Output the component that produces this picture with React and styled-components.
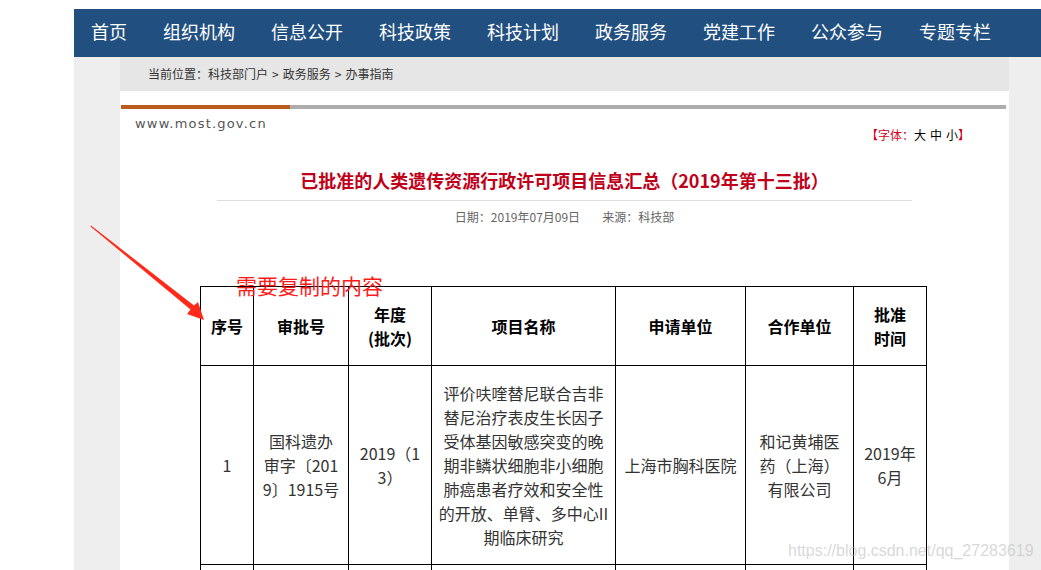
import React from 'react'
import styled, { createGlobalStyle } from 'styled-components'

const GlobalStyle = createGlobalStyle`
    body {
        margin: 0;
        background: #fff;
        font-family: "Noto Sans CJK SC", "Noto Sans", sans-serif;
    }
`
const Page = styled.div`
    position: relative;
    padding: 9px 0 0 74px;
    width: 967px;
    height: 561px;
    overflow: hidden;
`
const Nav = styled.nav`
    height: 48px;
    background: #214f80;
    display: flex;
    align-items: center;
    padding-left: 17px;
    gap: 36px;
`
const NavItem = styled.a`
    color: #fff;
    font-size: 18px;
    line-height: 44px;
    padding-bottom: 4px;
    white-space: nowrap;
`
const Main = styled.div`
    background: #eeeeee;
    padding: 0 32px 0 46px;
    min-height: 520px;
`
const Crumbs = styled.div`
    background: #e6e6e6;
    height: 34px;
    line-height: 34px;
    padding-left: 28px;
    font-size: 12px;
    color: #333;
`
const Sep = styled.span`
    margin: 0 4px;
`
const Article = styled.article`
    background: #fff;
    padding-top: 14px;
    min-height: 480px;
`
const Bar = styled.div`
    display: flex;
    height: 4px;
    margin: 0 3px 0 1px;
`
const BarPart = styled.div`
    background: ${p => p.$color};
    width: ${p => p.$w || 'auto'};
    flex: ${p => p.$w ? 'none' : 1};
`
const HeadRow = styled.div`
    display: flex;
    justify-content: space-between;
    align-items: flex-start;
    padding: 7px 39px 0 15px;
`
const Logo = styled.div`
    font-family: "DejaVu Sans", "Liberation Sans", sans-serif;
    font-size: 13px;
    letter-spacing: 1.2px;
    color: #555;
    line-height: 16px;
`
const FontSize = styled.div`
    font-size: 12px;
    margin-top: 10px;
    color: #000;
    span { color: #d0021b; }
    b { font-weight: 400; margin-left: 4px; }
`
const Title = styled.h1`
    margin: 23px auto 0;
    width: 695px;
    text-align: center;
    font-size: 18px;
    line-height: 28px;
    font-weight: 700;
    color: #c0001a;
    padding-bottom: 6px;
    border-bottom: 1px solid #ddd;
`
const Meta = styled.div`
    text-align: center;
    font-size: 12px;
    line-height: 20px;
    color: #666;
    margin-top: 6px;
    span + span { margin-left: 22px; }
`
const TableWrap = styled.div`
    position: relative;
    width: 726px;
    margin: 59px 0 0 80px;
`
const Note = styled.div`
    position: absolute;
    left: 36px;
    top: -14px;
    font-size: 21px;
    line-height: 26px;
    color: #ff1a1a;
    white-space: nowrap;
`
const Arrow = styled.svg`
    position: absolute;
    left: -112px;
    top: -63px;
`
const Table = styled.table`
    width: 726px;
    border-collapse: collapse;
    table-layout: fixed;
    font-size: 16px;
    line-height: 24px;
    color: #333;
    td, th {
        border: 1px solid #000;
        padding: 0 8px;
        text-align: center;
        vertical-align: middle;
        word-break: break-all;
    }
    th { color: #000; font-weight: 700; }
`
const HeadTr = styled.tr`
    height: 79px;
`
const BodyTr = styled.tr`
    height: 199px;
`
const Cell = styled.td`
    padding: ${p => p.$pad || '0 8px'} !important;
`
const Watermark = styled.div`
    position: absolute;
    left: 788px;
    top: 542px;
    font-family: "Liberation Sans", Arial, sans-serif;
    font-size: 16px;
    color: rgba(190, 190, 190, 0.6);
    white-space: nowrap;
`

const navItems = ['首页', '组织机构', '信息公开', '科技政策', '科技计划', '政务服务', '党建工作', '公众参与', '专题专栏']

export default function App() {
  return (
    <Page>
        <GlobalStyle />
        <Nav>
            {navItems.map(n => <NavItem key={n}>{n}</NavItem>)}
        </Nav>
        <Main>
            <Crumbs>当前位置：科技部门户<Sep>&gt;</Sep>政务服务<Sep>&gt;</Sep>办事指南</Crumbs>
            <Article>
                <Bar>
                    <BarPart $color="#b95c1c" $w="169px" />
                    <BarPart $color="#adadad" />
                </Bar>
                <HeadRow>
                    <Logo>www.most.gov.cn</Logo>
                    <FontSize><span>【字体：</span>大<b>中</b><b>小</b><span>】</span></FontSize>
                </HeadRow>
                <Title>已批准的人类遗传资源行政许可项目信息汇总（2019年第十三批）</Title>
                <Meta><span>日期：2019年07月09日</span><span>来源：科技部</span></Meta>
                <TableWrap>
                    <Table>
                        <colgroup>
                            <col style={{ width: 53 }} />
                            <col style={{ width: 95 }} />
                            <col style={{ width: 83 }} />
                            <col style={{ width: 184 }} />
                            <col style={{ width: 130 }} />
                            <col style={{ width: 108 }} />
                            <col style={{ width: 73 }} />
                        </colgroup>
                        <thead>
                            <HeadTr>
                                <th>序号</th>
                                <th>审批号</th>
                                <th>年度<br />(批次)</th>
                                <th>项目名称</th>
                                <th>申请单位</th>
                                <th>合作单位</th>
                                <th>批准<br />时间</th>
                            </HeadTr>
                        </thead>
                        <tbody>
                            <BodyTr>
                                <td>1</td>
                                <td>国科遗办审字〔2019〕1915号</td>
                                <td>2019（13）</td>
                                <Cell $pad="0 6px">评价呋喹替尼联合吉非替尼治疗表皮生长因子受体基因敏感突变的晚期非鳞状细胞非小细胞肺癌患者疗效和安全性的开放、单臂、多中心II期临床研究</Cell>
                                <td>上海市胸科医院</td>
                                <td>和记黄埔医药（上海）有限公司</td>
                                <td>2019年6月</td>
                            </BodyTr>
                            <BodyTr>
                                <td />
                                <td />
                                <td />
                                <td />
                                <td />
                                <td />
                                <td />
                            </BodyTr>
                        </tbody>
                    </Table>
                    <Note>需要复制的内容</Note>
                    <Arrow width="120" height="100" viewBox="0 0 120 100">
                        <polygon fill="#ff2a1a" points="3,2.5 106,82.5 110,79 116,97 99,91 102.5,86.5 2.5,3.5" />
                    </Arrow>
                </TableWrap>
            </Article>
        </Main>
        <Watermark>https://blog.csdn.net/qq_27283619</Watermark>
    </Page>
  )
}
